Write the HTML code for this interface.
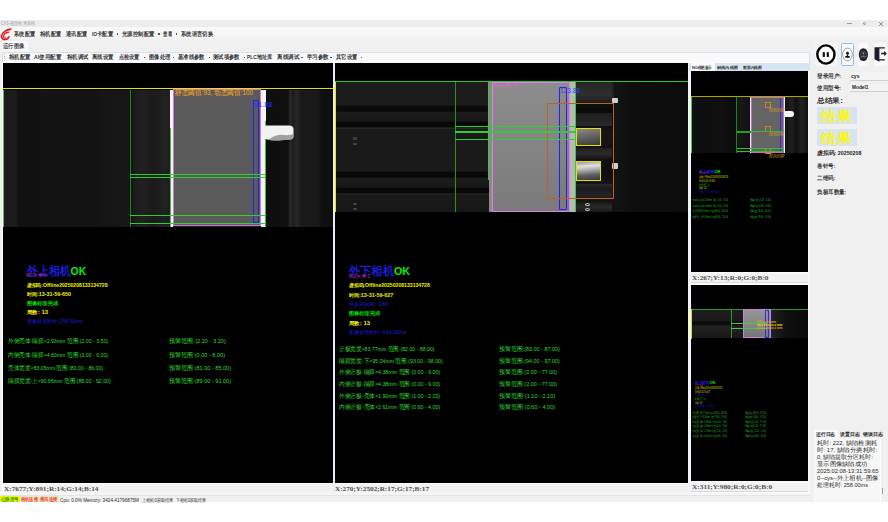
<!DOCTYPE html>
<html><head><meta charset="utf-8"><style>
*{margin:0;padding:0;box-sizing:border-box}
html,body{width:888px;height:522px;overflow:hidden;background:#fff;font-family:"Liberation Sans",sans-serif;position:relative}
.a{position:absolute}
.t{position:absolute;white-space:nowrap}
</style></head><body>
<div class="a" style="left:0px;top:19.7px;width:888px;height:7.4px;background:#ededed"></div>
<div class="a" style="left:0px;top:27.1px;width:888px;height:13.2px;background:linear-gradient(#f9f9f9,#f7f7f7 45%,#f1f1f1)"></div>
<div class="a" style="left:0px;top:40.3px;width:888px;height:461.7px;background:#f0f0f0"></div>
<div class="t" id="t1" style="left:1px;top:22.30px;font-size:4.6px;line-height:4.6px;color:#a0a0a0;;transform:scaleX(0.8296);transform-origin:0 50%;"><span class="in">CVS-视觉检测系统</span></div>
<div class="a" style="left:847.2px;top:23.2px;width:4.6px;height:0.7px;background:#9a9a9a"></div>
<div class="a" style="left:862.6px;top:21.6px;width:3.8px;height:3.8px;border:0.9px solid #888;border-radius:50%"></div>
<svg class="a" style="left:877.5px;top:20.5px" width="6" height="6" viewBox="0 0 6 6"><path d="M1 1 L5 5 M5 1 L1 5" stroke="#777" stroke-width="0.8"/></svg>
<svg class="a" style="left:0px;top:26px" width="16" height="16" viewBox="0 0 16 16">
<path d="M10.8 3.1 C6.5 3.6 2.2 6.2 1.6 9.8 C1.2 12.4 3.4 14 5.9 13.4 C7.2 13 8.3 12.1 8.9 10.8" fill="none" stroke="#e8101a" stroke-width="1.6" stroke-linecap="round"/>
<path d="M8.9 6.1 C6 6.5 3.8 8.2 3.6 10.4 C3.5 11.6 4.4 12.2 5.4 12.0" fill="none" stroke="#e8101a" stroke-width="1.2" stroke-linecap="round"/>
</svg>
<div class="t" id="t2" style="left:14px;top:32.25px;font-size:5.5px;line-height:5.5px;color:#333333;font-weight:bold;transform:scaleX(0.8750);transform-origin:0 50%;"><span class="in">系统配置</span></div>
<div class="t" id="t3" style="left:40px;top:32.25px;font-size:5.5px;line-height:5.5px;color:#333333;font-weight:bold;transform:scaleX(0.8750);transform-origin:0 50%;"><span class="in">相机配置</span></div>
<div class="t" id="t4" style="left:66px;top:32.25px;font-size:5.5px;line-height:5.5px;color:#333333;font-weight:bold;transform:scaleX(0.8750);transform-origin:0 50%;"><span class="in">通讯配置</span></div>
<div class="t" id="t5" style="left:92px;top:32.25px;font-size:5.5px;line-height:5.5px;color:#333333;font-weight:bold;transform:scaleX(0.8819);transform-origin:0 50%;"><span class="in">IO卡配置</span></div>
<div class="t" id="t6" style="left:121.6px;top:32.25px;font-size:5.5px;line-height:5.5px;color:#333333;font-weight:bold;transform:scaleX(0.9000);transform-origin:0 50%;"><span class="in">光源控制配置</span></div>
<div class="t" id="t7" style="left:163px;top:32.25px;font-size:5.5px;line-height:5.5px;color:#333333;font-weight:bold;transform:scaleX(0.7500);transform-origin:0 50%;"><span class="in">查看</span></div>
<div class="t" id="t8" style="left:181px;top:32.25px;font-size:5.5px;line-height:5.5px;color:#333333;font-weight:bold;transform:scaleX(0.8889);transform-origin:0 50%;"><span class="in">系统语言切换</span></div>
<div class="a" style="left:116.5px;top:33.4px;width:1.3px;height:1.3px;background:#555"></div>
<div class="a" style="left:158.3px;top:33.4px;width:1.3px;height:1.3px;background:#555"></div>
<div class="a" style="left:176px;top:33.4px;width:1.3px;height:1.3px;background:#555"></div>
<div class="a" style="left:2px;top:41.2px;width:25.5px;height:10px;background:#f9f9f9"></div>
<div class="t" id="t9" style="left:3px;top:44.25px;font-size:5.5px;line-height:5.5px;color:#444;font-weight:bold;transform:scaleX(0.8750);transform-origin:0 50%;"><span class="in">运行图像</span></div>
<div class="a" style="left:2px;top:52px;width:807.5px;height:11.4px;background:linear-gradient(#f9f9f9 0,#f9f9f9 80%,#fefefe);border:1px solid #d5e2ef;border-bottom:none"></div>
<div class="a" style="left:4px;top:54px;width:1px;height:7px;background:repeating-linear-gradient(#bbb 0 1px,transparent 1px 2px)"></div>
<div class="t" id="t10" style="left:8.8px;top:55.45px;font-size:5.5px;line-height:5.5px;color:#333333;font-weight:bold;transform:scaleX(0.8833);transform-origin:0 50%;"><span class="in">相机配置</span></div>
<div class="t" id="t11" style="left:34.4px;top:55.45px;font-size:5.5px;line-height:5.5px;color:#333333;font-weight:bold;transform:scaleX(0.9153);transform-origin:0 50%;"><span class="in">AI使用配置</span></div>
<div class="t" id="t12" style="left:66.6px;top:55.45px;font-size:5.5px;line-height:5.5px;color:#333333;font-weight:bold;transform:scaleX(0.8833);transform-origin:0 50%;"><span class="in">相机调试</span></div>
<div class="t" id="t13" style="left:92.2px;top:55.45px;font-size:5.5px;line-height:5.5px;color:#333333;font-weight:bold;transform:scaleX(0.8875);transform-origin:0 50%;"><span class="in">离线设置</span></div>
<div class="t" id="t14" style="left:118.8px;top:55.45px;font-size:5.5px;line-height:5.5px;color:#333333;font-weight:bold;transform:scaleX(0.8542);transform-origin:0 50%;"><span class="in">点检设置</span></div>
<div class="t" id="t15" style="left:148.8px;top:55.45px;font-size:5.5px;line-height:5.5px;color:#333333;font-weight:bold;transform:scaleX(0.8833);transform-origin:0 50%;"><span class="in">图像处理</span></div>
<div class="t" id="t16" style="left:178px;top:55.45px;font-size:5.5px;line-height:5.5px;color:#333333;font-weight:bold;transform:scaleX(0.8800);transform-origin:0 50%;"><span class="in">基准线参数</span></div>
<div class="t" id="t17" style="left:213.2px;top:55.45px;font-size:5.5px;line-height:5.5px;color:#333333;font-weight:bold;transform:scaleX(0.8833);transform-origin:0 50%;"><span class="in">测试项参数</span></div>
<div class="t" id="t18" style="left:247.3px;top:55.45px;font-size:5.5px;line-height:5.5px;color:#333333;font-weight:bold;transform:scaleX(0.8724);transform-origin:0 50%;"><span class="in">PLC地址库</span></div>
<div class="t" id="t19" style="left:277.3px;top:55.45px;font-size:5.5px;line-height:5.5px;color:#333333;font-weight:bold;transform:scaleX(0.9208);transform-origin:0 50%;"><span class="in">离线调试</span></div>
<div class="t" id="t20" style="left:306.8px;top:55.45px;font-size:5.5px;line-height:5.5px;color:#333333;font-weight:bold;transform:scaleX(0.9042);transform-origin:0 50%;"><span class="in">学习参数</span></div>
<div class="t" id="t21" style="left:336px;top:55.45px;font-size:5.5px;line-height:5.5px;color:#333333;font-weight:bold;transform:scaleX(0.8750);transform-origin:0 50%;"><span class="in">其它设置</span></div>
<div class="a" style="left:143.8px;top:56.8px;width:1.3px;height:1.3px;background:#555"></div>
<div class="a" style="left:172.6px;top:56.8px;width:1.3px;height:1.3px;background:#555"></div>
<div class="a" style="left:209.0px;top:56.8px;width:1.3px;height:1.3px;background:#555"></div>
<div class="a" style="left:243.6px;top:56.8px;width:1.3px;height:1.3px;background:#555"></div>
<div class="a" style="left:301.4px;top:56.8px;width:1.3px;height:1.3px;background:#555"></div>
<div class="a" style="left:330.4px;top:56.8px;width:1.3px;height:1.3px;background:#555"></div>
<div class="a" style="left:361.0px;top:56.8px;width:1.3px;height:1.3px;background:#555"></div>
<div class="a" style="left:2.2px;top:63px;width:1px;height:430px;background:#fbfbfb"></div>
<div class="a" style="left:3.2px;top:63.4px;width:329.8px;height:419.6px;background:#000"></div>
<div class="a" style="left:3.2px;top:89.5px;width:329.8px;height:137px;background:linear-gradient(90deg,#1b1b1b 0,#1b1b1b 13px,#111 15px,#111 36px,#141414 38px,#121212 90px,#161616 100px,#171717 126px,#131313 128px,#1c1c1c 132px,#202020 140px,#1a1a1a 150px,#222 162px,#1e1e1e 167px)"></div>
<div class="a" style="left:266px;top:89.5px;width:67px;height:137px;background:linear-gradient(90deg,#0e0e0e 0,#101010 22px,#2a2a2a 24px,#1c1c1c 27px,#282828 31px,#1a1a1a 35px,#181818 52px,#101010 56px,#0e0e0e 67px)"></div>
<div class="a" style="left:3.2px;top:87.9px;width:329.8px;height:1.6px;background:#e4e400"></div>
<div class="a" style="left:3.2px;top:89.5px;width:1.1px;height:137px;background:#5cc05c"></div>
<div class="a" style="left:130.3px;top:89.5px;width:0.9px;height:137px;background:#128a12"></div>
<div class="a" style="left:170.1px;top:89.5px;width:3.3px;height:137px;background:#f4f4f4"></div>
<div class="a" style="left:260.6px;top:89.5px;width:5.3px;height:137px;background:#f4f4f4"></div>
<div class="a" style="left:169.9px;top:128px;width:1.3px;height:98.5px;background:#33cc33"></div>
<div class="a" style="left:264.8px;top:120.7px;width:1.2px;height:106px;background:#33cc33"></div>
<div class="a" style="left:173.3px;top:89.3px;width:87.3px;height:137.2px;background:#5a5a5a;border:1.1px solid #e070e0"></div>
<div class="a" style="left:253.4px;top:100px;width:5.5px;height:123px;border:1.1px solid #2020ff"></div>
<div class="a" style="left:130.3px;top:173.5px;width:135px;height:1px;background:#33cc33"></div>
<div class="a" style="left:130.3px;top:176.5px;width:135px;height:1px;background:#33cc33"></div>
<div class="a" style="left:130.3px;top:214.6px;width:135px;height:1px;background:#33cc33"></div>
<div class="a" style="left:130.3px;top:222.8px;width:135px;height:1px;background:#33cc33"></div>
<svg class="a" style="left:264px;top:124px" width="32" height="18" viewBox="0 0 32 18"><path d="M1 1.5 H25 Q29.5 1.5 29.5 5 V12 Q29.5 15.5 26 15.5 L14 16.5 Q8 16.8 1 15 Z" fill="#f2f2f2"/><path d="M4 16 Q12 10 20 11 Q26 11.5 29.5 10 V12 Q29.5 15.5 26 15.5 L14 16.5 Z" fill="#8a8a8a" opacity=".8"/></svg>
<div class="t" id="t22" style="left:174.9px;top:89.90px;font-size:6.6px;line-height:6.6px;color:#ffaa22;font-weight:500;transform:scaleX(0.9550);transform-origin:0 50%;"><span class="in">静态阈值:93, 动态阈值:100</span></div>
<div class="t" id="t23" style="left:253.6px;top:101.30px;font-size:7px;line-height:7px;color:#2030ff;;transform:scaleX(1.0496);transform-origin:0 50%;"><span class="in">91.88</span></div>
<div class="t" id="t24" style="left:26.8px;top:266.05px;font-size:11.5px;line-height:11.5px;color:#1c1cdc;;transform:scaleX(0.9073);transform-origin:0 50%;"><span class="in"><span style="color:#1c1cdc;font-weight:bold">外上相机</span><span style="color:#00f000;font-weight:bold">OK</span></span></div>
<div class="t" id="t25" style="left:25.5px;top:274.00px;font-size:4.6px;line-height:4.6px;color:#c030c0;;transform:scaleX(0.9887);transform-origin:0 50%;"><span class="in">NG大类:0</span></div>
<div class="t" id="t26" style="left:26.5px;top:283.10px;font-size:5.4px;line-height:5.4px;color:#f0f000;font-weight:bold;transform:scaleX(0.9488);transform-origin:0 50%;"><span class="in">虚拟码:Offline20250208133134728</span></div>
<div class="t" id="t27" style="left:26.5px;top:292.10px;font-size:5.4px;line-height:5.4px;color:#f0f000;font-weight:bold;transform:scaleX(0.9961);transform-origin:0 50%;"><span class="in">时间:13-31-59-650</span></div>
<div class="t" id="t28" style="left:26.5px;top:301.10px;font-size:5.4px;line-height:5.4px;color:#00dd00;font-weight:bold;transform:scaleX(1.0333);transform-origin:0 50%;"><span class="in">图像处理完成</span></div>
<div class="t" id="t29" style="left:26.5px;top:310.10px;font-size:5.4px;line-height:5.4px;color:#f0f000;font-weight:bold;transform:scaleX(1.0883);transform-origin:0 50%;"><span class="in">周数: 13</span></div>
<div class="t" id="t30" style="left:26.5px;top:319.10px;font-size:5.4px;line-height:5.4px;color:#1c1cdc;;transform:scaleX(0.9881);transform-origin:0 50%;"><span class="in">图像处理耗时: 258.50ms</span></div>
<div class="t" id="t31" style="left:8.1px;top:339.45px;font-size:5.5px;line-height:5.5px;color:#30dd30;;transform:scaleX(0.9458);transform-origin:0 50%;"><span class="in">外侧壳体-隔膜≈2.93mm 范围:(2.00 - 3.50)</span></div>
<div class="t" id="t32" style="left:169px;top:339.45px;font-size:5.5px;line-height:5.5px;color:#30dd30;;transform:scaleX(1.0234);transform-origin:0 50%;"><span class="in">预警范围:(2.20 - 3.20)</span></div>
<div class="t" id="t33" style="left:8.1px;top:352.95px;font-size:5.5px;line-height:5.5px;color:#30dd30;;transform:scaleX(0.9458);transform-origin:0 50%;"><span class="in">内侧壳体-隔膜≈4.60mm 范围:(3.00 - 6.00)</span></div>
<div class="t" id="t34" style="left:169px;top:352.95px;font-size:5.5px;line-height:5.5px;color:#30dd30;;transform:scaleX(1.0090);transform-origin:0 50%;"><span class="in">预警范围:(0.00 - 8.00)</span></div>
<div class="t" id="t35" style="left:8.1px;top:365.85px;font-size:5.5px;line-height:5.5px;color:#30dd30;;transform:scaleX(0.9407);transform-origin:0 50%;"><span class="in">壳体宽度≈83.05mm 范围:(80.00 - 86.00)</span></div>
<div class="t" id="t36" style="left:169px;top:365.85px;font-size:5.5px;line-height:5.5px;color:#30dd30;;transform:scaleX(1.0063);transform-origin:0 50%;"><span class="in">预警范围:(81.00 - 85.00)</span></div>
<div class="t" id="t37" style="left:8.1px;top:379.45px;font-size:5.5px;line-height:5.5px;color:#30dd30;;transform:scaleX(0.9429);transform-origin:0 50%;"><span class="in">隔膜宽度-上≈90.56mm 范围:(88.00 - 92.00)</span></div>
<div class="t" id="t38" style="left:169px;top:379.45px;font-size:5.5px;line-height:5.5px;color:#30dd30;;transform:scaleX(1.0063);transform-origin:0 50%;"><span class="in">预警范围:(89.00 - 91.00)</span></div>
<div class="a" style="left:3.2px;top:483px;width:329.8px;height:9.2px;background:linear-gradient(#fbfbfb 0,#fbfbfb 1px,#f1f1f1 1.8px)"></div>
<div class="t" id="t39" style="left:3.9px;top:485.85px;font-size:6.9px;line-height:6.9px;color:#505050;font-family:'Liberation Serif',serif;font-weight:bold;transform:scaleX(1.0535);transform-origin:0 50%;"><span class="in">X:7677;Y:891;R:14;G:14;B:14</span></div>
<div class="a" style="left:333px;top:63px;width:1.5px;height:430px;background:#e6eef8"></div>
<div class="a" style="left:334.5px;top:63.4px;width:353px;height:419.6px;background:#000"></div>
<div class="a" style="left:334.5px;top:81.5px;width:353px;height:130.5px;background:linear-gradient(#1c1c1c 0,#1a1a1a 23px,#0a0a0a 24.5px,#0a0a0a 29px,#1a1a1a 30.5px,#181818 39px,#080808 40.5px,#080808 45px,#303030 46px,#1a1a1a 47px,#1a1a1a 89px,#080808 90.5px,#080808 95px,#1c1c1c 96px,#181818 105px,#080808 106.5px,#080808 111px,#2c2c2c 112px,#1a1a1a 113px,#161616)"></div>
<div class="a" style="left:352.5px;top:137.3px;width:4px;height:2.4px;border:0.7px solid #4a4a4a;border-radius:50%"></div>
<div class="a" style="left:352.5px;top:142.60000000000002px;width:4px;height:2.4px;border:0.7px solid #4a4a4a;border-radius:50%"></div>
<div class="a" style="left:352.5px;top:203.10000000000002px;width:4px;height:2.4px;border:0.7px solid #4a4a4a;border-radius:50%"></div>
<div class="a" style="left:352.5px;top:207.8px;width:4px;height:2.4px;border:0.7px solid #4a4a4a;border-radius:50%"></div>
<div class="a" style="left:614px;top:81.5px;width:73.5px;height:130.5px;background:linear-gradient(90deg,#141414,#0e0e0e 20px,#0c0c0c)"></div>
<div class="a" style="left:575px;top:81.5px;width:39px;height:130.5px;background:linear-gradient(#1e1e1e 0,#222 20px,#0e0e0e 22px,#0a0a0a 40px,#161616 50px,#0e0e0e 90px,#1a1a1a 110px,#0e0e0e)"></div>
<div class="a" style="left:576px;top:81.5px;width:36px;height:22px;background:linear-gradient(#262626,#2e2e2e 60%,#1a1a1a)"></div>
<div class="a" style="left:576px;top:108px;width:36px;height:3px;background:#0a0a0a"></div>
<div class="a" style="left:576px;top:113px;width:36px;height:13px;background:linear-gradient(#1e1e1e,#2a2a2a)"></div>
<div class="a" style="left:576px;top:148px;width:36px;height:11px;background:linear-gradient(#202020,#2a2a2a 50%,#151515)"></div>
<div class="a" style="left:576px;top:184px;width:36px;height:28px;background:linear-gradient(#2a2a2a,#1a1a1a 20%,#262626 40%,#111 60%,#2a2a2a 80%,#1a1a1a)"></div>
<div class="a" style="left:585px;top:203px;width:5px;height:3px;border:0.8px solid #bbb;border-radius:50%"></div>
<div class="a" style="left:585px;top:207.5px;width:5px;height:3px;border:0.8px solid #bbb;border-radius:50%"></div>
<div class="a" style="left:612px;top:98px;width:6px;height:5px;background:#cfcfcf;border-radius:1px"></div>
<div class="a" style="left:612px;top:163px;width:6px;height:6px;background:#cfcfcf;border-radius:1px"></div>
<div class="a" style="left:334.5px;top:81.1px;width:353px;height:1.2px;background:#22cc22"></div>
<div class="a" style="left:334.5px;top:82px;width:1.2px;height:130px;background:#e6e600"></div>
<div class="a" style="left:455px;top:81.5px;width:0.9px;height:130.5px;background:#1a9a1a"></div>
<div class="a" style="left:488px;top:82px;width:1.4px;height:97.5px;background:#33cc33"></div>
<div class="a" style="left:489.4px;top:82px;width:3px;height:130px;background:#8a8a8a"></div>
<div class="a" style="left:491.8px;top:81.8px;width:78px;height:130px;background:linear-gradient(#8c8c8c,#848484 50%,#7a7a7a);border:1.2px solid #e080e0"></div>
<div class="a" style="left:569.5px;top:81.8px;width:6.5px;height:130px;background:#b8b8b8"></div>
<div class="a" style="left:575px;top:81.8px;width:1px;height:130px;background:#33cc33"></div>
<div class="a" style="left:559.4px;top:86.7px;width:7.6px;height:123px;border:1.3px solid #2020ff;border-radius:1px"></div>
<div class="a" style="left:547px;top:103.3px;width:67.4px;height:95.3px;border:1px solid #c06030"></div>
<div class="a" style="left:576px;top:128.3px;width:24.5px;height:17.5px;border:1.2px solid #e8e000;background:linear-gradient(170deg,#8a8a8a,#6a6a6a 40%,#505050 70%,#3a3a3a)"></div>
<div class="a" style="left:576px;top:161px;width:24.5px;height:20.4px;border:1.2px solid #e8e000;background:linear-gradient(175deg,#999 0,#e0e0e0 25%,#aaa 45%,#606060 70%,#3a3a3a)"></div>
<div class="a" style="left:455px;top:126px;width:120px;height:1px;background:#33cc33"></div>
<div class="a" style="left:455px;top:131.3px;width:120px;height:1.5px;background:#33cc33"></div>
<div class="a" style="left:455px;top:139.3px;width:120px;height:1px;background:#33cc33"></div>
<div class="t" id="t40" style="left:493px;top:83.30px;font-size:5px;line-height:5px;color:#d070d0;;transform:scaleX(1.2668);transform-origin:0 50%;"><span class="in">AI检测框</span></div>
<div class="t" id="t41" style="left:560px;top:87.50px;font-size:6.6px;line-height:6.6px;color:#3040ff;;transform:scaleX(0.9915);transform-origin:0 50%;"><span class="in">123.88</span></div>
<div class="t" id="t42" style="left:349px;top:266.05px;font-size:11.5px;line-height:11.5px;color:#1c1cdc;;transform:scaleX(0.9349);transform-origin:0 50%;"><span class="in"><span style="color:#1c1cdc;font-weight:bold">外下相机</span><span style="color:#00f000;font-weight:bold">OK</span></span></div>
<div class="t" id="t43" style="left:348.5px;top:274.50px;font-size:4.6px;line-height:4.6px;color:#c030c0;;transform:scaleX(1.0128);transform-origin:0 50%;"><span class="in">NG大类:0</span></div>
<div class="t" id="t44" style="left:349px;top:283.10px;font-size:5.4px;line-height:5.4px;color:#f0f000;font-weight:bold;transform:scaleX(0.9523);transform-origin:0 50%;"><span class="in">虚拟码:Offline20250208133134728</span></div>
<div class="t" id="t45" style="left:349px;top:292.60px;font-size:5.4px;line-height:5.4px;color:#f0f000;font-weight:bold;transform:scaleX(1.0029);transform-origin:0 50%;"><span class="in">时间:13-31-59-627</span></div>
<div class="t" id="t46" style="left:349px;top:301.80px;font-size:5.4px;line-height:5.4px;color:#1c1cdc;;transform:scaleX(1.0514);transform-origin:0 50%;"><span class="in">外面AI耗时: 166</span></div>
<div class="t" id="t47" style="left:349px;top:311.10px;font-size:5.4px;line-height:5.4px;color:#00dd00;font-weight:bold;transform:scaleX(1.0333);transform-origin:0 50%;"><span class="in">图像处理完成</span></div>
<div class="t" id="t48" style="left:349px;top:320.80px;font-size:5.4px;line-height:5.4px;color:#f0f000;font-weight:bold;transform:scaleX(1.0883);transform-origin:0 50%;"><span class="in">周数: 13</span></div>
<div class="t" id="t49" style="left:349px;top:329.70px;font-size:5.4px;line-height:5.4px;color:#1c1cdc;;transform:scaleX(1.0111);transform-origin:0 50%;"><span class="in">图像处理耗时: 143.00ms</span></div>
<div class="t" id="t50" style="left:338.9px;top:346.55px;font-size:5.5px;line-height:5.5px;color:#30dd30;;transform:scaleX(0.9457);transform-origin:0 50%;"><span class="in">正极宽度≈83.77mm 范围:(82.00 - 88.00)</span></div>
<div class="t" id="t51" style="left:498.9px;top:346.55px;font-size:5.5px;line-height:5.5px;color:#30dd30;;transform:scaleX(0.9869);transform-origin:0 50%;"><span class="in">预警范围:(83.00 - 87.00)</span></div>
<div class="t" id="t52" style="left:338.9px;top:358.75px;font-size:5.5px;line-height:5.5px;color:#30dd30;;transform:scaleX(0.9521);transform-origin:0 50%;"><span class="in">隔膜宽度-下≈95.24mm 范围:(93.00 - 98.00)</span></div>
<div class="t" id="t53" style="left:498.9px;top:358.75px;font-size:5.5px;line-height:5.5px;color:#30dd30;;transform:scaleX(0.9869);transform-origin:0 50%;"><span class="in">预警范围:(94.00 - 97.00)</span></div>
<div class="t" id="t54" style="left:338.9px;top:370.05px;font-size:5.5px;line-height:5.5px;color:#30dd30;;transform:scaleX(0.9562);transform-origin:0 50%;"><span class="in">外侧正极-隔膜≈4.38mm 范围:(0.00 - 9.00)</span></div>
<div class="t" id="t55" style="left:498.9px;top:370.05px;font-size:5.5px;line-height:5.5px;color:#30dd30;;transform:scaleX(0.9924);transform-origin:0 50%;"><span class="in">预警范围:(2.00 - 77.00)</span></div>
<div class="t" id="t56" style="left:338.9px;top:382.05px;font-size:5.5px;line-height:5.5px;color:#30dd30;;transform:scaleX(0.9562);transform-origin:0 50%;"><span class="in">内侧正极-隔膜≈4.38mm 范围:(0.00 - 9.00)</span></div>
<div class="t" id="t57" style="left:498.9px;top:382.05px;font-size:5.5px;line-height:5.5px;color:#30dd30;;transform:scaleX(0.9924);transform-origin:0 50%;"><span class="in">预警范围:(2.00 - 77.00)</span></div>
<div class="t" id="t58" style="left:338.9px;top:393.55px;font-size:5.5px;line-height:5.5px;color:#30dd30;;transform:scaleX(0.9562);transform-origin:0 50%;"><span class="in">外侧正极-壳体≈1.90mm 范围:(1.00 - 2.20)</span></div>
<div class="t" id="t59" style="left:498.9px;top:393.55px;font-size:5.5px;line-height:5.5px;color:#30dd30;;transform:scaleX(1.0108);transform-origin:0 50%;"><span class="in">预警范围:(1.10 - 2.10)</span></div>
<div class="t" id="t60" style="left:338.9px;top:405.25px;font-size:5.5px;line-height:5.5px;color:#30dd30;;transform:scaleX(0.9562);transform-origin:0 50%;"><span class="in">内侧正极-壳体≈2.61mm 范围:(0.60 - 4.00)</span></div>
<div class="t" id="t61" style="left:498.9px;top:405.25px;font-size:5.5px;line-height:5.5px;color:#30dd30;;transform:scaleX(1.0108);transform-origin:0 50%;"><span class="in">预警范围:(0.60 - 4.00)</span></div>
<div class="a" style="left:334.5px;top:483px;width:353px;height:9.2px;background:linear-gradient(#fbfbfb 0,#fbfbfb 1px,#f1f1f1 1.8px)"></div>
<div class="t" id="t62" style="left:335.4px;top:485.85px;font-size:6.9px;line-height:6.9px;color:#505050;font-family:'Liberation Serif',serif;font-weight:bold;transform:scaleX(1.0479);transform-origin:0 50%;"><span class="in">X:270;Y:2502;R:17;G:17;B:17</span></div>
<div class="a" style="left:0px;top:492.2px;width:810px;height:2.6px;background:#f5f5f5"></div>
<div class="a" style="left:0px;top:494.6px;width:810px;height:0.7px;background:#e2e4e8"></div>
<div class="a" style="left:687.8px;top:63px;width:3px;height:430px;background:#eef4fa"></div>
<div class="a" style="left:689.4px;top:62.9px;width:120.8px;height:8px;background:#d6e5f4"></div>
<div class="a" style="left:690.8px;top:63.2px;width:24px;height:7.7px;background:#fafafa"></div>
<div class="t" id="t63" style="left:692px;top:66.00px;font-size:4.4px;line-height:4.4px;color:#333;font-weight:bold;transform:scaleX(0.8852);transform-origin:0 50%;"><span class="in">NG线图显示</span></div>
<div class="t" id="t64" style="left:717px;top:66.00px;font-size:4.4px;line-height:4.4px;color:#333;font-weight:bold;transform:scaleX(1.0500);transform-origin:0 50%;"><span class="in">斜线内线图</span></div>
<div class="t" id="t65" style="left:743px;top:66.00px;font-size:4.4px;line-height:4.4px;color:#333;font-weight:bold;transform:scaleX(0.9500);transform-origin:0 50%;"><span class="in">前面内线图</span></div>
<div class="a" style="left:807.7px;top:70.9px;width:2.6px;height:421px;background:#f6f6f6"></div>
<div class="a" style="left:690.8px;top:70.9px;width:116.9px;height:201.7px;background:#000"></div>
<div class="a" style="left:690.8px;top:96.7px;width:116.9px;height:56.3px;background:linear-gradient(90deg,#141414,#0e0e0e 6px,#101010 30px,#0c0c0c 44px,#181818 48px,#121212 58px)"></div>
<div class="a" style="left:784.4px;top:96.7px;width:23.3px;height:56.3px;background:linear-gradient(90deg,#101010,#202020 8px,#101010 12px,#222 18px,#101010)"></div>
<div class="a" style="left:690.8px;top:96.3px;width:116.9px;height:0.9px;background:#a8a800"></div>
<div class="a" style="left:691px;top:96.7px;width:0.8px;height:56.3px;background:#4c4"></div>
<div class="a" style="left:736.2px;top:96.7px;width:0.7px;height:56.3px;background:#1a8a1a"></div>
<div class="a" style="left:749.8px;top:96.7px;width:1.2px;height:56.3px;background:#eee"></div>
<div class="a" style="left:783.5px;top:96.7px;width:1.3px;height:56.3px;background:#eee"></div>
<div class="a" style="left:751px;top:97px;width:32.5px;height:55.8px;background:#646464;border:0.6px solid #c070c0"></div>
<div class="a" style="left:779.8px;top:98px;width:0.9px;height:54px;background:#2a2aee"></div>
<div class="a" style="left:765px;top:102px;width:6px;height:6px;border:0.7px solid #d08020"></div>
<div class="t" style="left:769px;top:108.50px;font-size:2.6px;line-height:2.6px;color:#e0a020;;"><span class="in">NG xx.xx mm</span></div>
<div class="t" style="left:769px;top:111.00px;font-size:2.6px;line-height:2.6px;color:#e0a020;;"><span class="in">xx.x xx.x mm</span></div>
<div class="a" style="left:765px;top:126px;width:6px;height:6px;border:0.7px solid #d08020"></div>
<div class="t" style="left:769px;top:132.50px;font-size:2.6px;line-height:2.6px;color:#e0a020;;"><span class="in">NG xx.xx mm</span></div>
<div class="t" style="left:769px;top:135.00px;font-size:2.6px;line-height:2.6px;color:#e0a020;;"><span class="in">xx.x xx.x mm</span></div>
<div class="a" style="left:765px;top:148px;width:6px;height:6px;border:0.7px solid #d08020"></div>
<div class="t" style="left:769px;top:154.50px;font-size:2.6px;line-height:2.6px;color:#e0a020;;"><span class="in">NG xx.xx mm</span></div>
<div class="t" style="left:769px;top:157.00px;font-size:2.6px;line-height:2.6px;color:#e0a020;;"><span class="in">xx.x xx.x mm</span></div>
<div class="a" style="left:736.5px;top:131px;width:47px;height:1.1px;background:#33bb33"></div>
<div class="a" style="left:736.5px;top:130.5px;width:14px;height:2.2px;background:#2a9a2a"></div>
<div class="a" style="left:736.5px;top:147.6px;width:47px;height:0.9px;background:#33bb33"></div>
<div class="a" style="left:736.5px;top:151.2px;width:47px;height:0.9px;background:#33bb33"></div>
<div class="a" style="left:785px;top:111px;width:9px;height:6px;background:#f4f4f4;border-radius:0 3px 3px 0"></div>
<div class="t" id="t66" style="left:699px;top:169.60px;font-size:4.4px;line-height:4.4px;color:#1c1cdc;;transform:scaleX(0.9649);transform-origin:0 50%;"><span class="in"><span style="color:#1c1cdc;font-weight:bold">外上相机</span><span style="color:#00f000;font-weight:bold">OK</span></span></div>
<div class="t" id="t67" style="left:699px;top:172.40px;font-size:3.4px;line-height:3.4px;color:#c030c0;opacity:.85;transform:scaleX(0.6465);transform-origin:0 50%;"><span class="in">NG大类:0</span></div>
<div class="t" id="t68" style="left:699px;top:175.90px;font-size:3.4px;line-height:3.4px;color:#f0f000;opacity:.85;transform:scaleX(0.5604);transform-origin:0 50%;"><span class="in">虚拟码:Offline20250208133134728</span></div>
<div class="t" id="t69" style="left:699px;top:179.60px;font-size:3.4px;line-height:3.4px;color:#f0f000;opacity:.85;transform:scaleX(0.5858);transform-origin:0 50%;"><span class="in">时间:13-31-59-650</span></div>
<div class="t" id="t70" style="left:699px;top:183.50px;font-size:3.4px;line-height:3.4px;color:#00dd00;opacity:.85;transform:scaleX(0.6111);transform-origin:0 50%;"><span class="in">图像处理完成</span></div>
<div class="t" id="t71" style="left:699px;top:187.10px;font-size:3.4px;line-height:3.4px;color:#f0f000;opacity:.85;transform:scaleX(0.6434);transform-origin:0 50%;"><span class="in">周数: 13</span></div>
<div class="t" id="t72" style="left:699px;top:190.80px;font-size:3.4px;line-height:3.4px;color:#1c1cdc;opacity:.85;transform:scaleX(0.5750);transform-origin:0 50%;"><span class="in">图像处理耗时: 258.50ms</span></div>
<div class="t" id="t73" style="left:692px;top:199.10px;font-size:3.4px;line-height:3.4px;color:#30dd30;opacity:.8;transform:scaleX(0.6041);transform-origin:0 50%;"><span class="in">外侧壳体-隔膜≈2.93mm 范围:(2.00 - 3.50)</span></div>
<div class="t" id="t74" style="left:750px;top:199.10px;font-size:3.4px;line-height:3.4px;color:#30dd30;opacity:.8;transform:scaleX(0.6683);transform-origin:0 50%;"><span class="in">预警范围:(2.20 - 3.20)</span></div>
<div class="t" id="t75" style="left:692px;top:204.65px;font-size:3.4px;line-height:3.4px;color:#30dd30;opacity:.8;transform:scaleX(0.6041);transform-origin:0 50%;"><span class="in">内侧壳体-隔膜≈4.60mm 范围:(3.00 - 6.00)</span></div>
<div class="t" id="t76" style="left:750px;top:204.65px;font-size:3.4px;line-height:3.4px;color:#30dd30;opacity:.8;transform:scaleX(0.6683);transform-origin:0 50%;"><span class="in">预警范围:(0.00 - 8.00)</span></div>
<div class="t" id="t77" style="left:692px;top:210.20px;font-size:3.4px;line-height:3.4px;color:#30dd30;opacity:.8;transform:scaleX(0.6194);transform-origin:0 50%;"><span class="in">壳体宽度≈83.05mm 范围:(80.00 - 86.00)</span></div>
<div class="t" id="t78" style="left:750px;top:210.20px;font-size:3.4px;line-height:3.4px;color:#30dd30;opacity:.8;transform:scaleX(0.5968);transform-origin:0 50%;"><span class="in">预警范围:(81.00 - 85.00)</span></div>
<div class="t" id="t79" style="left:692px;top:215.75px;font-size:3.4px;line-height:3.4px;color:#30dd30;opacity:.8;transform:scaleX(0.5783);transform-origin:0 50%;"><span class="in">隔膜宽度-上≈90.56mm 范围:(88.00 - 92.00)</span></div>
<div class="t" id="t80" style="left:750px;top:215.75px;font-size:3.4px;line-height:3.4px;color:#30dd30;opacity:.8;transform:scaleX(0.5968);transform-origin:0 50%;"><span class="in">预警范围:(89.00 - 91.00)</span></div>
<div class="a" style="left:690.8px;top:272.4px;width:116.9px;height:9.4px;background:linear-gradient(#fcfcfc 0,#fcfcfc 1.2px,#f1f1f1 1.8px)"></div>
<div class="a" style="left:690.8px;top:281.6px;width:116.9px;height:1.4px;background:#dadada"></div>
<div class="a" style="left:690.8px;top:283px;width:116.9px;height:2.3px;background:#fcfcfc"></div>
<div class="t" id="t81" style="left:691.8px;top:275.45px;font-size:6.7px;line-height:6.7px;color:#505050;font-family:'Liberation Serif',serif;font-weight:bold;transform:scaleX(1.0875);transform-origin:0 50%;"><span class="in">X:267;Y:13;R:0;G:0;B:0</span></div>
<div class="a" style="left:690.8px;top:285.3px;width:116.9px;height:195.9px;background:#000"></div>
<div class="a" style="left:690.8px;top:308.8px;width:116.9px;height:29.6px;background:linear-gradient(#1e1e1e,#1a1a1a 12px,#0a0a0a 13px,#0c0c0c 16px,#222 17px,#181818)"></div>
<div class="a" style="left:771px;top:308.8px;width:36.7px;height:29.6px;background:linear-gradient(90deg,#222,#161616 10px,#101010 15px,#0a0a0a)"></div>
<div class="a" style="left:690.8px;top:308.5px;width:116.9px;height:0.9px;background:#2a9a2a"></div>
<div class="a" style="left:691px;top:309px;width:0.9px;height:29.5px;background:#e0e000"></div>
<div class="a" style="left:731px;top:308.8px;width:0.7px;height:29.6px;background:#2a9a2a"></div>
<div class="a" style="left:742.7px;top:309px;width:28.4px;height:29.4px;background:linear-gradient(#959595,#888 50%,#767676);border:0.7px solid #d080d0"></div>
<div class="a" style="left:765px;top:310px;width:3.7px;height:28px;border:0.7px solid #2a2aee"></div>
<div class="a" style="left:731px;top:323.2px;width:36px;height:1.2px;background:#44cc44"></div>
<div class="a" style="left:731px;top:328px;width:36px;height:1.2px;background:#44cc44"></div>
<div class="t" style="left:757px;top:320.80px;font-size:3px;line-height:3px;color:#e0a020;font-weight:bold;"><span class="in">NG xx.xx mm</span></div>
<div class="t" style="left:757px;top:324.10px;font-size:3px;line-height:3px;color:#f0e000;font-weight:bold;"><span class="in">xx.x xx.x xx.x mm</span></div>
<div class="t" style="left:757px;top:327.30px;font-size:3px;line-height:3px;color:#e0a020;font-weight:bold;"><span class="in">xx.x xx.x xx.x mm</span></div>
<div class="t" id="t82" style="left:695.3px;top:380.70px;font-size:4.2px;line-height:4.2px;color:#1c1cdc;;transform:scaleX(0.9156);transform-origin:0 50%;"><span class="in"><span style="color:#1c1cdc;font-weight:bold">外下相机</span><span style="color:#00f000;font-weight:bold">OK</span></span></div>
<div class="t" id="t83" style="left:695.3px;top:383.60px;font-size:3.4px;line-height:3.4px;color:#c030c0;opacity:.85;transform:scaleX(0.5746);transform-origin:0 50%;"><span class="in">NG大类:0</span></div>
<div class="t" id="t84" style="left:695.3px;top:386.90px;font-size:3.4px;line-height:3.4px;color:#f0f000;opacity:.85;transform:scaleX(0.5217);transform-origin:0 50%;"><span class="in">虚拟码:Offline20250208133134728</span></div>
<div class="t" id="t85" style="left:695.3px;top:390.60px;font-size:3.4px;line-height:3.4px;color:#f0f000;opacity:.85;transform:scaleX(0.5492);transform-origin:0 50%;"><span class="in">时间:13-31-59-627</span></div>
<div class="t" id="t86" style="left:695.3px;top:394.10px;font-size:3.4px;line-height:3.4px;color:#1c1cdc;opacity:.85;transform:scaleX(0.5714);transform-origin:0 50%;"><span class="in">外面AI耗时: 166</span></div>
<div class="t" id="t87" style="left:695.3px;top:398.10px;font-size:3.4px;line-height:3.4px;color:#00dd00;opacity:.85;transform:scaleX(0.5833);transform-origin:0 50%;"><span class="in">图像处理完成</span></div>
<div class="t" id="t88" style="left:695.3px;top:401.80px;font-size:3.4px;line-height:3.4px;color:#f0f000;opacity:.85;transform:scaleX(0.6005);transform-origin:0 50%;"><span class="in">周数: 13</span></div>
<div class="t" id="t89" style="left:695.3px;top:405.10px;font-size:3.4px;line-height:3.4px;color:#1c1cdc;opacity:.85;transform:scaleX(0.5463);transform-origin:0 50%;"><span class="in">图像处理耗时: 143.00ms</span></div>
<div class="t" id="t90" style="left:692px;top:411.80px;font-size:3.4px;line-height:3.4px;color:#30dd30;opacity:.8;transform:scaleX(0.6022);transform-origin:0 50%;"><span class="in">正极宽度≈83.77mm 范围:(82.00 - 88.00)</span></div>
<div class="t" id="t91" style="left:745px;top:411.80px;font-size:3.4px;line-height:3.4px;color:#30dd30;opacity:.8;transform:scaleX(0.5968);transform-origin:0 50%;"><span class="in">预警范围:(83.00 - 87.00)</span></div>
<div class="t" id="t92" style="left:692px;top:416.35px;font-size:3.4px;line-height:3.4px;color:#30dd30;opacity:.8;transform:scaleX(0.5622);transform-origin:0 50%;"><span class="in">隔膜宽度-下≈95.24mm 范围:(93.00 - 98.00)</span></div>
<div class="t" id="t93" style="left:745px;top:416.35px;font-size:3.4px;line-height:3.4px;color:#30dd30;opacity:.8;transform:scaleX(0.5968);transform-origin:0 50%;"><span class="in">预警范围:(94.00 - 97.00)</span></div>
<div class="t" id="t94" style="left:692px;top:420.90px;font-size:3.4px;line-height:3.4px;color:#30dd30;opacity:.8;transform:scaleX(0.5873);transform-origin:0 50%;"><span class="in">外侧正极-隔膜≈4.38mm 范围:(0.00 - 9.00)</span></div>
<div class="t" id="t95" style="left:745px;top:420.90px;font-size:3.4px;line-height:3.4px;color:#30dd30;opacity:.8;transform:scaleX(0.6304);transform-origin:0 50%;"><span class="in">预警范围:(2.00 - 77.00)</span></div>
<div class="t" id="t96" style="left:692px;top:425.45px;font-size:3.4px;line-height:3.4px;color:#30dd30;opacity:.8;transform:scaleX(0.5873);transform-origin:0 50%;"><span class="in">内侧正极-隔膜≈4.38mm 范围:(0.00 - 9.00)</span></div>
<div class="t" id="t97" style="left:745px;top:425.45px;font-size:3.4px;line-height:3.4px;color:#30dd30;opacity:.8;transform:scaleX(0.6304);transform-origin:0 50%;"><span class="in">预警范围:(2.00 - 77.00)</span></div>
<div class="t" id="t98" style="left:692px;top:430.00px;font-size:3.4px;line-height:3.4px;color:#30dd30;opacity:.8;transform:scaleX(0.5873);transform-origin:0 50%;"><span class="in">外侧正极-壳体≈1.90mm 范围:(1.00 - 2.20)</span></div>
<div class="t" id="t99" style="left:745px;top:430.00px;font-size:3.4px;line-height:3.4px;color:#30dd30;opacity:.8;transform:scaleX(0.6683);transform-origin:0 50%;"><span class="in">预警范围:(1.10 - 2.10)</span></div>
<div class="t" id="t100" style="left:692px;top:434.55px;font-size:3.4px;line-height:3.4px;color:#30dd30;opacity:.8;transform:scaleX(0.5873);transform-origin:0 50%;"><span class="in">内侧正极-壳体≈2.61mm 范围:(0.60 - 4.00)</span></div>
<div class="t" id="t101" style="left:745px;top:434.55px;font-size:3.4px;line-height:3.4px;color:#30dd30;opacity:.8;transform:scaleX(0.6683);transform-origin:0 50%;"><span class="in">预警范围:(0.60 - 4.00)</span></div>
<div class="a" style="left:690.8px;top:481.2px;width:116.9px;height:10px;background:linear-gradient(#fcfcfc 0,#fcfcfc 1.2px,#f1f1f1 1.8px)"></div>
<div class="a" style="left:690.8px;top:491.2px;width:116.9px;height:1.2px;background:#d8d8d8"></div>
<div class="a" style="left:690.8px;top:492.4px;width:116.9px;height:0.8px;background:#fcfcfc"></div>
<div class="t" id="t102" style="left:691.7px;top:483.85px;font-size:6.7px;line-height:6.7px;color:#505050;font-family:'Liberation Serif',serif;font-weight:bold;transform:scaleX(1.0939);transform-origin:0 50%;"><span class="in">X:311;Y:980;R:0;G:0;B:0</span></div>
<div class="a" style="left:814.7px;top:43.4px;width:22px;height:22.6px;background:#f6f6f6;border-radius:1.5px"></div>
<svg class="a" style="left:814px;top:43px" width="24" height="24" viewBox="0 0 24 24"><ellipse cx="11.9" cy="11.5" rx="8.6" ry="9.1" fill="#fff" stroke="#000" stroke-width="2.4"/><rect x="8.7" y="8.9" width="2.2" height="5.2" rx="0.9" fill="#111"/><rect x="12.7" y="8.9" width="2.2" height="5.2" rx="0.9" fill="#111"/></svg>
<div class="a" style="left:841.1px;top:43px;width:12.5px;height:23.4px;background:#fafafa;border:1px solid #90c0f0;border-radius:1.5px"></div>
<svg class="a" style="left:841px;top:45px" width="13" height="20" viewBox="0 0 13 20"><ellipse cx="6.5" cy="9.5" rx="4.9" ry="6.4" fill="#fdfdfd" stroke="#666" stroke-width="0.6"/><circle cx="6.5" cy="8.2" r="1.4" fill="#111"/><path d="M4.3 11 H8.7 V12.8 H4.3Z" fill="#111"/><path d="M5.5 9.5 L7.5 9.5 L7 11 H6Z" fill="#111"/></svg>
<div class="a" style="left:858px;top:43.2px;width:10.1px;height:23px;background:#f8f8f8;border-radius:1.5px"></div>
<svg class="a" style="left:858px;top:45px" width="11" height="20" viewBox="0 0 11 20"><ellipse cx="5.4" cy="9.6" rx="4.6" ry="6.4" fill="#1e1e2e"/><ellipse cx="5.4" cy="9.6" rx="3" ry="3.6" fill="none" stroke="#666" stroke-width="0.6"/><circle cx="5.4" cy="8.4" r="1.1" fill="#888"/><path d="M3.2 11.2 Q5.4 9.6 7.6 11.2 V11.8 H3.2Z" fill="#888"/></svg>
<div class="a" style="left:873.5px;top:43.4px;width:13.8px;height:23px;background:#f8f8f8;border-radius:1.5px"></div>
<svg class="a" style="left:873.4px;top:43px" width="15" height="24" viewBox="0 0 15 24"><path d="M1.5 4.2 H11.8 V5.4 H6.4 V16.3 H11.8 V17.5 H6.4 V18.8 L1.5 16.2Z" fill="#1c1c2c"/><path d="M8.2 9.7 H11.2 V7.8 L13.8 10.5 L11.2 13.2 V11.3 H8.2Z" fill="#1c1c2c"/></svg>
<div class="t" id="t103" style="left:816.8px;top:74.15px;font-size:5.5px;line-height:5.5px;color:#353535;font-weight:bold;transform:scaleX(0.9287);transform-origin:0 50%;"><span class="in">登录用户:</span></div>
<div class="a" style="left:850.3px;top:72.3px;width:37.7px;height:8.4px;background:#f3f3f3;border-bottom:1.2px solid #d0d0d0"></div>
<div class="t" id="t104" style="left:851px;top:74.05px;font-size:5.5px;line-height:5.5px;color:#222;font-weight:bold;transform:scaleX(0.9252);transform-origin:0 50%;"><span class="in">cys</span></div>
<div class="t" id="t105" style="left:816.8px;top:85.65px;font-size:5.5px;line-height:5.5px;color:#353535;font-weight:bold;transform:scaleX(0.9287);transform-origin:0 50%;"><span class="in">使用型号:</span></div>
<div class="a" style="left:850.3px;top:84px;width:37.7px;height:8.4px;background:#f3f3f3;border-bottom:1.2px solid #d0d0d0"></div>
<div class="t" id="t106" style="left:851.5px;top:85.25px;font-size:5.5px;line-height:5.5px;color:#222;font-weight:bold;transform:scaleX(0.8706);transform-origin:0 50%;"><span class="in">Model1</span></div>
<div class="t" id="t107" style="left:816.7px;top:97.20px;font-size:7.2px;line-height:7.2px;color:#333;font-weight:bold;transform:scaleX(1.1023);transform-origin:0 50%;"><span class="in">总结果:</span></div>
<div class="a" style="left:817.2px;top:107.2px;width:40.3px;height:16.8px;background:#d7e3f2"></div>
<div class="t" id="t108" style="left:821px;top:109.80px;font-size:14px;line-height:14px;color:#f8f810;font-family:'Liberation Serif',serif;letter-spacing:2px;font-weight:bold;transform:scaleX(1.0312);transform-origin:0 50%;"><span class="in">结果</span></div>
<div class="a" style="left:817.2px;top:129.2px;width:40.3px;height:16.6px;background:#d7e3f2"></div>
<div class="t" id="t109" style="left:821px;top:131.70px;font-size:14px;line-height:14px;color:#f8f810;font-family:'Liberation Serif',serif;letter-spacing:2px;font-weight:bold;transform:scaleX(1.0312);transform-origin:0 50%;"><span class="in">结果</span></div>
<div class="t" id="t110" style="left:816.5px;top:151.25px;font-size:5.5px;line-height:5.5px;color:#222;font-weight:bold;transform:scaleX(0.9707);transform-origin:0 50%;"><span class="in">虚拟码: 20250208</span></div>
<div class="t" id="t111" style="left:816.7px;top:163.95px;font-size:5.5px;line-height:5.5px;color:#353535;font-weight:bold;transform:scaleX(0.9272);transform-origin:0 50%;"><span class="in">卷针号:</span></div>
<div class="t" id="t112" style="left:816.7px;top:176.05px;font-size:5.5px;line-height:5.5px;color:#353535;font-weight:bold;transform:scaleX(0.9272);transform-origin:0 50%;"><span class="in">二维码:</span></div>
<div class="t" id="t113" style="left:816.7px;top:190.35px;font-size:5.5px;line-height:5.5px;color:#353535;font-weight:bold;transform:scaleX(0.9170);transform-origin:0 50%;"><span class="in">负极耳数量:</span></div>
<div class="a" style="left:813.9px;top:430.4px;width:23.8px;height:7.8px;background:#fbfbfb"></div>
<div class="t" id="t114" style="left:816px;top:431.50px;font-size:5px;line-height:5px;color:#222;font-weight:bold;transform:scaleX(0.9500);transform-origin:0 50%;"><span class="in">运行日志</span></div>
<div class="t" id="t115" style="left:839.5px;top:431.90px;font-size:5px;line-height:5px;color:#222;font-weight:bold;transform:scaleX(0.9700);transform-origin:0 50%;"><span class="in">设置日志</span></div>
<div class="t" id="t116" style="left:863px;top:431.90px;font-size:5px;line-height:5px;color:#222;font-weight:bold;transform:scaleX(0.9900);transform-origin:0 50%;"><span class="in">错误日志</span></div>
<div class="a" style="left:813.9px;top:438.2px;width:67.5px;height:63.8px;background:#f7f7f7;border-right:1px solid #fdfdfd"></div>
<div class="t" id="t117" style="left:816.8px;top:441.00px;font-size:5.6px;line-height:5.6px;color:#2a2a2a;;transform:scaleX(1.0458);transform-origin:0 50%;"><span class="in">耗时: 222, 缺陷检测耗</span></div>
<div class="t" id="t118" style="left:816.8px;top:447.95px;font-size:5.6px;line-height:5.6px;color:#2a2a2a;;transform:scaleX(1.0750);transform-origin:0 50%;"><span class="in">时: 17, 缺陷分类耗时:</span></div>
<div class="t" id="t119" style="left:816.8px;top:454.90px;font-size:5.6px;line-height:5.6px;color:#2a2a2a;;transform:scaleX(1.0039);transform-origin:0 50%;"><span class="in">0, 缺陷提取分区耗时:</span></div>
<div class="t" id="t120" style="left:816.8px;top:461.85px;font-size:5.6px;line-height:5.6px;color:#2a2a2a;;transform:scaleX(1.0500);transform-origin:0 50%;"><span class="in">显示图像缺陷成功</span></div>
<div class="t" id="t121" style="left:816.8px;top:468.80px;font-size:5.6px;line-height:5.6px;color:#2a2a2a;;transform:scaleX(1.0333);transform-origin:0 50%;"><span class="in">2025:02:08-13:31:59:65</span></div>
<div class="t" id="t122" style="left:816.8px;top:475.75px;font-size:5.6px;line-height:5.6px;color:#2a2a2a;;transform:scaleX(1.0462);transform-origin:0 50%;"><span class="in">0--cys--外上相机--图像</span></div>
<div class="t" id="t123" style="left:816.8px;top:482.70px;font-size:5.6px;line-height:5.6px;color:#2a2a2a;;transform:scaleX(0.9848);transform-origin:0 50%;"><span class="in">处理耗时: 258.00ms</span></div>
<div class="a" style="left:882.3px;top:487.5px;width:1px;height:6px;background:#a0a0a0"></div>
<div class="a" style="left:0px;top:496px;width:20px;height:6px;background:#f4f400"></div>
<div class="t" id="t124" style="left:1px;top:497.50px;font-size:4.6px;line-height:4.6px;color:#20a020;font-weight:bold;transform:scaleX(0.8750);transform-origin:0 50%;"><span class="in">心跳信号</span></div>
<div class="a" style="left:20px;top:496px;width:39px;height:6px;background:#e2efc6"></div>
<div class="t" id="t125" style="left:20.7px;top:497.50px;font-size:4.6px;line-height:4.6px;color:#ff3030;font-weight:bold;transform:scaleX(0.8350);transform-origin:0 50%;"><span class="in">相机连接</span></div>
<div class="t" id="t126" style="left:40px;top:497.50px;font-size:4.6px;line-height:4.6px;color:#ff3030;font-weight:bold;transform:scaleX(0.8600);transform-origin:0 50%;"><span class="in">通讯连接</span></div>
<div class="t" id="t127" style="left:60px;top:497.90px;font-size:5.2px;line-height:5.2px;color:#333;;transform:scaleX(0.9011);transform-origin:0 50%;"><span class="in">Cpu: 0.0% Memory: 3424.41796875M</span></div>
<div class="t" id="t128" style="left:142px;top:498.00px;font-size:5px;line-height:5px;color:#333;;transform:scaleX(0.8311);transform-origin:0 50%;"><span class="in">上相机0获取结果</span></div>
<div class="t" id="t129" style="left:176px;top:498.00px;font-size:5px;line-height:5px;color:#333;;transform:scaleX(0.8073);transform-origin:0 50%;"><span class="in">下相机0获取结果</span></div>
</body></html>
